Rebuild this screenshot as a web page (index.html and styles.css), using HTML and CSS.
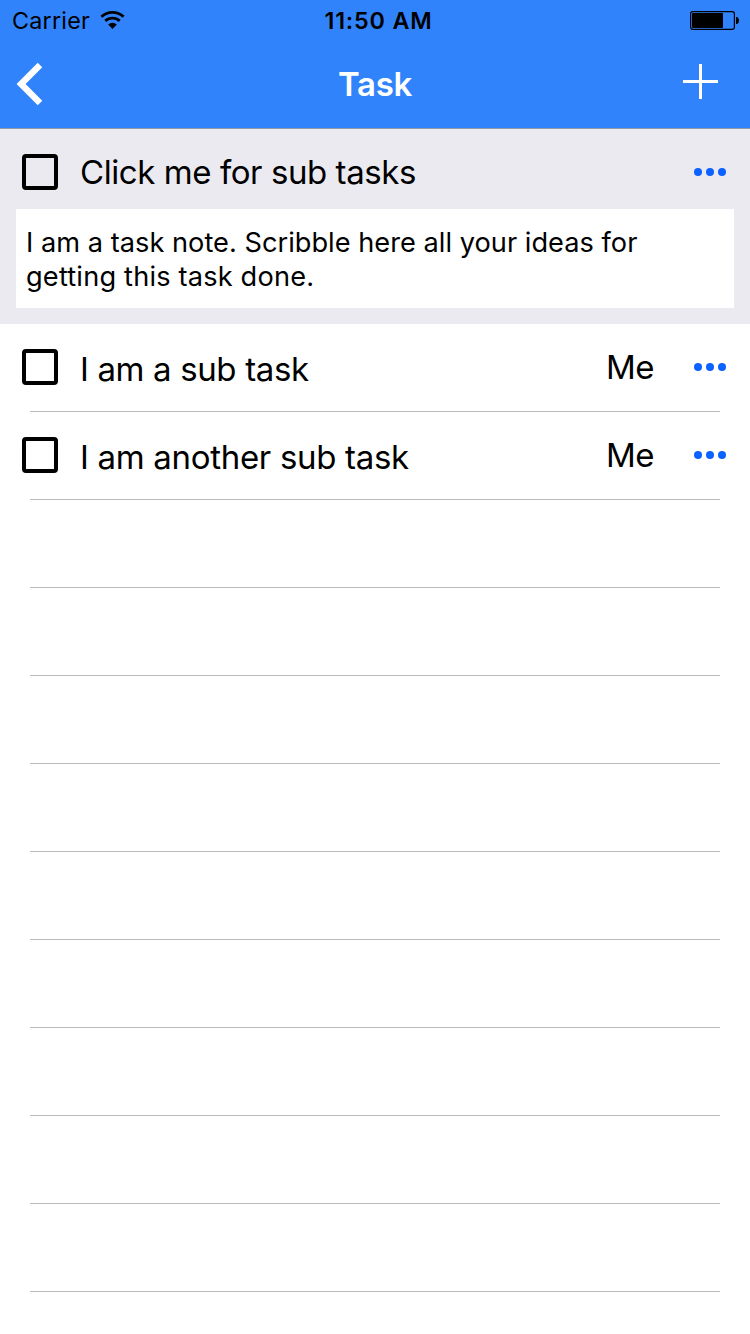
FILE: index.html
```html
<!DOCTYPE html>
<html lang="en">
<head>
<meta charset="utf-8">
<title>Task</title>
<link rel="stylesheet" href="styles.css">
</head>
<body>
<header class="header">
  <div class="status">
    <div class="carrier"><span class="carrier-name">Carrier</span>
      <svg class="wifi" width="26" height="20" viewBox="0 0 26 20">
        <g fill="none" stroke="#000" stroke-width="2.9">
          <path d="M1.4 6.8 A16.2 16.2 0 0 1 23.6 6.8"/>
          <path d="M5.3 10.9 A10.6 10.6 0 0 1 19.7 10.9"/>
        </g>
        <path d="M8.2 14.5 A6.2 6.2 0 0 1 16.8 14.5 L12.5 19 Z"/>
      </svg>
    </div>
    <div class="clock"><span class="clock-text">11:50 AM</span></div>
    <div class="battery-slot">
      <svg width="50" height="20" viewBox="0 0 50 20">
        <rect x="0.6" y="0.7" width="43.8" height="17.6" rx="2.2" fill="none" stroke="#000" stroke-width="1.2"/>
        <rect x="2" y="2" width="31" height="15" rx="1"/>
        <path d="M46 6 h1 q2 0.8 2 3.5 t-2 3.5 h-1 z"/>
      </svg>
    </div>
  </div>
  <nav class="navbar">
    <svg class="back" width="30" height="46" viewBox="0 0 30 46"><path d="M24 4.1 L5.1 23 L24 41.9" fill="none" stroke="#fff" stroke-width="6.4"/></svg>
    <h1 class="title"><span class="title-text">Task</span></h1>
    <svg class="add" width="36" height="36" viewBox="0 0 36 36"><path d="M16 0h3v35h-3z M0 16h35v3H0z" fill="#fff"/></svg>
  </nav>
</header>
<main>
  <section class="parent">
    <div class="parent-row">
      <span class="checkbox"></span>
      <span class="label parent-label">Click me for sub tasks</span>
      <span class="more"><i></i><i></i><i></i></span>
    </div>
    <p class="note"><span class="note-a">I am a task note. Scribble here all your ideas for</span><br><span class="note-b">getting this task done.</span></p>
  </section>
  <ul class="list">
    <li class="row"><span class="checkbox"></span><span class="label sub-label sub-a">I am a sub task</span><span class="owner">Me</span><span class="more"><i></i><i></i><i></i></span></li>
    <li class="row"><span class="checkbox"></span><span class="label sub-label sub-b">I am another sub task</span><span class="owner">Me</span><span class="more"><i></i><i></i><i></i></span></li>
    <li class="row"></li><li class="row"></li><li class="row"></li>
    <li class="row"></li><li class="row"></li><li class="row"></li>
    <li class="row"></li><li class="row"></li><li class="row"></li>
  </ul>
</main>
</body>
</html>
```
FILE: styles.css
```css
* { box-sizing: border-box; }
body {
  margin: 0;
  height: 1334px;
  overflow: hidden;
  background: #fff;
  color: #000;
  font-family: Inter, "Liberation Sans", sans-serif;
  font-size: 33px;
}
.header { height: 129px; background: #3083fb; border-bottom: 1px solid #8e98a8; }
.status {
  display: grid;
  grid-template-columns: 1fr auto 1fr;
  height: 40px;
  padding: 0 10px 0 12px;
  line-height: 41px;
  font-size: 23.3px;
}
.carrier { display: flex; gap: 10px; }
.carrier-name { letter-spacing: .25px; }
.wifi { margin-top: 10px; }
.clock { font-weight: 600; padding-left: 5px; letter-spacing: .8px; }
.battery-slot { display: flex; justify-content: flex-end; padding-top: 11px; }
.battery-slot svg { display: block; }
.navbar {
  display: grid;
  grid-template-columns: 1fr auto 1fr;
  height: 88px;
  padding: 0 31px 0 16px;
}
.back { margin-top: 21px; }
.title { margin: 0; padding-left: 15px; font-size: 33px; font-weight: 600; letter-spacing: -.3px; line-height: 88px; color: #fff; }
.add { justify-self: end; margin-top: 24px; }
.parent { height: 195px; padding: 0 16px; background: #ebeaf1; }
.parent-row { display: flex; align-items: center; height: 80px; padding: 6px 8px 0 6px; }
.checkbox { flex: none; width: 36px; height: 36px; border: 4px solid #000; border-radius: 4px; }
.label { flex: 1; margin-left: 22px; line-height: 40px; white-space: nowrap; }
.parent-label { letter-spacing: -.43px; }
.sub-label { padding-top: 4px; }
.sub-a { letter-spacing: -.36px; }
.sub-b { letter-spacing: -.31px; }
.more { display: flex; gap: 4px; }
.more i { width: 8px; height: 8px; border-radius: 50%; background: #0b62ff; }
.note { margin: 0; height: 99px; padding: 17px 10px; background: #fff; font-size: 27.2px; line-height: 34px; white-space: nowrap; }
.note-a { letter-spacing: .02px; }
.note-b { letter-spacing: .18px; }
.list { margin: 0; padding: 0 30px; list-style: none; }
.row { display: flex; align-items: center; height: 88px; margin: 0; padding-bottom: 1px; border-bottom: 1px solid #bab9be; }
.row .checkbox { margin-left: -8px; }
.owner { line-height: 40px; margin-right: 40px; letter-spacing: -.5px; }
.row .more { margin-right: -6px; }
```
